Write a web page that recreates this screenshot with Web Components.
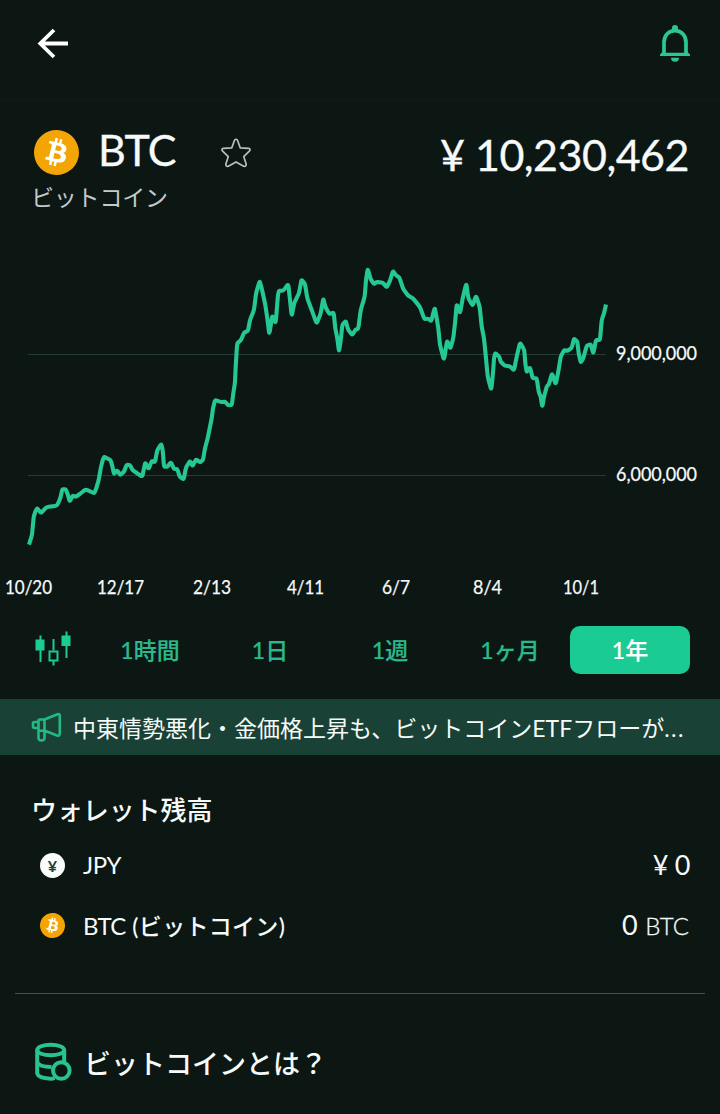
<!DOCTYPE html>
<html lang="ja">
<head>
<meta charset="utf-8">
<title>BTC</title>
<style>
body {
  margin: 0;
  background: #0c1714;
  color: #f6faf8;
  font-family: Lato, "Noto Sans CJK JP", sans-serif;
  --green: #1acb94;
  --green-text: #2bb98b;
}
</style>
</head>
<body>
<coin-page></coin-page>

<script>
class BaseElement extends HTMLElement {
  connectedCallback() {
    const root = this.attachShadow({ mode: "open" });
    const template = document.createElement("template");
    template.innerHTML = this.template();
    root.appendChild(template.content.cloneNode(true));
  }
}

class BtcCoin extends BaseElement {
  template() {
    return `
<style>
:host { display: block; width: 45px; height: 45px; }
svg { display: block; width: 100%; height: 100%; }
</style>
<svg viewBox="0 0 24 24">
  <circle cx="12" cy="12" r="10" fill="#fff"/>
  <path fill="#f2a505" d="M23.638 14.904c-1.602 6.43-8.113 10.34-14.542 8.736C2.67 22.05-1.244 15.525.362 9.105 1.962 2.67 8.475-1.243 14.9.358c6.43 1.605 10.342 8.115 8.738 14.548v-.002zm-6.35-4.613c.24-1.59-.974-2.45-2.64-3.03l.54-2.153-1.315-.33-.525 2.107c-.345-.087-.705-.167-1.064-.25l.526-2.127-1.32-.33-.54 2.165c-.285-.067-.565-.132-.84-.2l-1.815-.45-.35 1.407s.975.225.955.236c.535.136.63.486.615.766l-1.477 5.92c-.075.166-.24.406-.614.314.015.02-.96-.24-.96-.24l-.66 1.51 1.71.426.93.242-.54 2.19 1.32.327.54-2.17c.36.1.705.19 1.05.273l-.51 2.154 1.32.33.545-2.19c2.24.427 3.93.257 4.64-1.774.57-1.637-.03-2.58-1.217-3.196.854-.193 1.5-.76 1.68-1.93h.01zm-3.01 4.22c-.404 1.64-3.157.75-4.05.53l.72-2.9c.896.23 3.757.67 3.33 2.37zm.41-4.24c-.37 1.49-2.662.735-3.405.55l.654-2.64c.744.18 3.137.524 2.75 2.084v.006z"/>
</svg>`;
  }
}
customElements.define("btc-coin", BtcCoin);

class JpyCoin extends BaseElement {
  template() {
    return `
<style>
:host {
  display: flex;
  align-items: center;
  justify-content: center;
  box-sizing: border-box;
  width: 25px;
  height: 25px;
  border-radius: 50%;
  background: #fafcfb;
  color: #1b4036;
  font: 700 16px/25px Lato, sans-serif;
}
</style>
<span>¥</span>`;
  }
}
customElements.define("jpy-coin", JpyCoin);

class TopBar extends BaseElement {
  template() {
    return `
<style>
:host {
  display: flex;
  justify-content: space-between;
  align-items: flex-start;
  box-sizing: border-box;
  height: 100px;
  padding: 24px 28px 0 36px;
  border-bottom: 1px solid #0f1b18;
}
svg { display: block; }
</style>
<svg width="34" height="40" viewBox="0 0 34 40" fill="none" stroke="#fff" stroke-width="3.8">
  <path d="M32 19.5H4M18 6L4.3 19.5L18 33"/>
</svg>
<svg width="34" height="40" viewBox="0 0 34 40">
  <path d="M6 30V18.500C6 11.500 10.500 6.700 17 6.700S28 11.500 28 18.500V30" fill="none" stroke="#2bc694" stroke-width="3.700"/>
  <path fill="#2bc694" d="M14 6.500V4a3 3 0 0 1 6 0v2.500zM2 32v-1.500l4-4.300V28.800h22v-2.600l4 4.300V32zM13 33.800h8a4 4 0 0 1-8 0z"/>
</svg>`;
  }
}
customElements.define("top-bar", TopBar);

class AssetSummary extends BaseElement {
  template() {
    return `
<style>
:host {
  display: flex;
  justify-content: space-between;
  box-sizing: border-box;
  height: 140px;
  padding: 26px 31px 0 31px;
}
.title { display: flex; height: 54px; }
btc-coin { margin: 4px 0 0 3px; }
.symbol {
  width: 122px;
  margin-left: 19px;
  font-size: 43px;
  line-height: 48px;
  letter-spacing: -0.7px;
  -webkit-text-stroke: 0.3px;
}
.star { margin-top: 11px; }
.name {
  font-size: 23px;
  line-height: 34px;
  letter-spacing: -0.2px;
  color: #c3cac7;
}
.price {
  font-size: 43px;
  line-height: 57px;
  letter-spacing: -0.5px;
  white-space: pre;
  -webkit-text-stroke: 0.3px;
}
</style>
<div>
  <div class="title">
    <btc-coin></btc-coin>
    <span class="symbol"><slot name="symbol"></slot></span>
    <svg class="star" width="32" height="32" viewBox="0 0 32 32" fill="none" stroke="#b6bfbb" stroke-width="1.700" stroke-linejoin="round">
      <path d="M14.500 3.200Q16 1.300 17.500 3.200L20.200 10.800L28.600 11.300Q31 11.900 29.600 13.800L23.700 19.600L26.200 27.300Q26.200 30 23.700 29.200L16 24.900L8.300 29.200Q5.800 30 5.800 27.300L8.300 19.600L2.400 13.800Q1 11.900 3.400 11.300L11.800 10.800Z"/>
    </svg>
  </div>
  <div class="name"><slot name="name"></slot></div>
</div>
<div class="price"><slot name="price"></slot></div>`;
  }
}
customElements.define("asset-summary", AssetSummary);

// one year of prices, x/y in chart units
const YEAR_POINTS = `29,544.7 32,535 33.7,516.7 35.7,510.7 37.3,508.3 41,513 46.7,507 57,505.7 60.3,498.3
62.3,489.3 65.7,489.3 67.7,494.3 69.7,501.3 72.7,495.7 76,496.7 80.7,493.3 85.7,489.3 94.3,493.3
96.3,488.3 98.7,480 100.7,468.3 102.7,460 104.3,456.7 110.7,460.3 112.3,466 114,474 117,470.3
120.3,475 124,471.7 126.7,464.7 130,465 132.7,470.3 142.3,476.7 144,468.3 145.3,462.7 148.7,469
151.7,461 155,462 157.3,450 161.3,444 162.7,450 164,466.7 167.3,466.7 171,462.3 174,469 177.3,469
179.7,476.7 183.7,479.3 186,467.3 190,461 192.7,466 196,459.3 200,462.3 203,460 205,448.3
207.7,438.3 209,431.7 211.7,418.3 213,408.3 215,400 221,402 225,401.7 228.3,405.3 231.8,405
233.5,392 234.9,383.3 235.7,366.7 236.7,350 237.3,343.3 241,340 244,332.7 248,330.7 250,320
254,310 256,293.3 259.7,281 261.7,288.3 265,303.3 267.3,318.3 269.3,334.5 272.3,315.5 275.7,323.3
278.3,290.7 283.3,290.7 288.3,284 290,300 291.7,316 294.3,302.7 299,293.3 301.5,279.5 305,284
307.3,298.3 312.3,311.7 316.7,323.7 320.7,313.3 323.3,298.5 325.3,306.7 329.3,314 333.7,312.7
335.3,328.3 337.3,338.3 339,351.7 341,338.3 342.3,325 345.7,321 348.3,330 352.3,335 355.3,330
358.3,328.7 360.7,310 364.7,296.7 366,280 367.7,268.7 370.7,279.3 374,284 376.7,282 382.7,282.7
386.7,287.3 390,280.7 393,271 396,275.3 399.3,277.3 403.3,289.3 408.3,295.7 413.3,298.7 420,307
424.3,319 428,318.7 431.3,321 434.7,307.5 436.7,318.3 438.3,328.3 440,345 444,360.3 447,340.5
450.3,348.7 453.3,338.3 455,323.3 456.7,304 460,313.3 462.7,298.3 466.3,283.2 468.3,298.3
472.7,305.7 476,295.7 479.7,306.7 481.7,326.7 484,338.3 486,358.3 487.7,376.7 491.3,390
493,373.3 494,358.3 495.3,353 499.3,356.7 500.7,361.7 504.7,365.7 510,366.3 514,370.3
516.7,356.7 520,342.7 524.3,350 525.3,363.3 526.7,372 530,367.3 532.7,378.3 536.7,378.3
538.7,391.7 540.7,396.7 542.3,407 544,396.7 546.7,386.7 549,384 552,373.3 555.7,384.5
558.3,371.7 560.7,356.7 564,350.3 567.7,350.7 571.7,347.7 574,338.6 577.3,341.7 578.7,353.3
580.7,362.5 583.3,358.3 586.7,345.7 590.7,344.3 593.3,353.5 596,340 600,340 601.7,320 604,313.3 606,304.5`;

class PriceChart extends BaseElement {
  // round the corners: curve through the midpoints of the segments
  linePath() {
    const pts = YEAR_POINTS.split(/\s+/).map(p => p.split(",").map(Number));
    let d = `M${pts[0]}`;
    for (let i = 1; i < pts.length - 1; i++) {
      const [x0, y0] = pts[i - 1];
      const [x, y] = pts[i];
      const [x1, y1] = pts[i + 1];
      d += `L${x + (x0 - x) * 0.2} ${y + (y0 - y) * 0.2}Q${x} ${y} ${x + (x1 - x) * 0.2} ${y + (y1 - y) * 0.2}`;
    }
    return d + `L${pts[pts.length - 1]}`;
  }
  template() {
    const ylabels = [["9,000,000", 354, 360], ["6,000,000", 475, 481]];
    // label, x, width
    const xlabels = [
      ["10/20", 5, 47], ["12/17", 97, 47], ["2/13", 193, 38], ["4/11", 287, 37],
      ["6/7", 382, 28], ["8/4", 473, 29], ["10/1", 563, 36],
    ];
    return `
<style>
:host { display: block; height: 370px; }
svg { display: block; }
text { font: 20px Lato, sans-serif; fill: #f6faf8; stroke: #f6faf8; stroke-width: 0.25; }
.grid { stroke: #263a38; stroke-width: 1; }
.line {
  fill: none;
  stroke: #25c894;
  stroke-width: 4.1;
  stroke-linejoin: round;
}
</style>
<svg width="720" height="370" viewBox="0 240 720 370">
  ${ylabels.map(([t, y, ty]) => `<path class="grid" d="M28 ${y + 0.5}H606"/>
  <text x="616" y="${ty}" textLength="81" lengthAdjust="spacingAndGlyphs">${t}</text>`).join("")}
  <path class="line" d="${this.linePath()}"/>
  ${xlabels.map(([t, x, w]) => `<text x="${x}" y="594" textLength="${w}" lengthAdjust="spacingAndGlyphs">${t}</text>`).join("")}
</svg>`;
  }
}
customElements.define("price-chart", PriceChart);

class RangeTab extends BaseElement {
  template() {
    return `
<style>
:host {
  display: block;
  width: 120px;
  height: 48px;
  border-radius: 10px;
  color: var(--green-text);
  font-size: 23px;
  font-weight: 500;
  line-height: 49px;
  text-align: center;
  -webkit-text-stroke: 0.2px;
}
:host([active]) { background: var(--green); color: #fff; }
</style>
<slot></slot>`;
  }
}
customElements.define("range-tab", RangeTab);

class RangeTabs extends BaseElement {
  template() {
    return `
<style>
:host {
  display: flex;
  box-sizing: border-box;
  height: 89px;
  padding: 16px 30px 0 34px;
}
svg { flex: none; margin: 4px 16px 0 0; }
</style>
<svg width="40" height="38" viewBox="0 0 40 38" fill="none" stroke="#1acb94" stroke-width="2">
  <path d="M6.500 5.500V32M19.500 9V20.500M19.500 30.500V35.500M32.500 1.500V28"/>
  <path d="M2.500 10.500h7v9h-7zM28.500 6.500h7v8.500h-7z" fill="#1acb94"/>
  <path d="M15.500 21.500h8v9h-8z"/>
</svg>
<slot></slot>`;
  }
}
customElements.define("range-tabs", RangeTabs);

class NewsBanner extends BaseElement {
  template() {
    return `
<style>
:host {
  display: flex;
  align-items: center;
  box-sizing: border-box;
  height: 56px;
  padding: 0 20px 0 31px;
  background: #1a4135;
  font-size: 23px;
  line-height: 56px;
}
svg { flex: none; margin-right: 11px; }
p { margin: 0; white-space: nowrap; padding-top: 2px; }
.more { letter-spacing: 1.5px; }
</style>
<svg width="31" height="32" viewBox="0 0 31 32" fill="none" stroke="#22b985" stroke-width="2.600" stroke-linejoin="round">
  <path d="M8.500 8.500L14 8.200L26.500 3.200Q28.800 2.500 28.800 5V22.500Q28.800 25.500 26 24.500L14 19.800H8.500Q7.500 19.800 7.500 18.500V9.800Q7.500 8.500 8.500 8.500ZM13.500 8.500V19.500M7.500 11H3.500Q2 11 2 12.500V15.500Q2 17 3.500 17H7.500M7.500 19.500V27Q7.500 29.500 10.500 29.500T13.500 27V19.500"/>
</svg>
<p><slot></slot><span class="more">...</span></p>`;
  }
}
customElements.define("news-banner", NewsBanner);

class WalletRow extends BaseElement {
  template() {
    return `
<style>
:host {
  display: flex;
  align-items: center;
  height: 60px;
  padding: 0 30px 0 40px;
  font-size: 24px;
}
.icon { width: 43px; }
.label { flex: 1; }
.label, .amount { margin-top: -2px; }
.icon ::slotted(btc-coin) { width: 25px; height: 25px; }
</style>
<span class="icon"><slot name="icon"></slot></span>
<span class="label"><slot></slot></span>
<span class="amount"><slot name="amount"></slot></span>`;
  }
}
customElements.define("wallet-row", WalletRow);

class WalletBalance extends BaseElement {
  template() {
    return `
<style>
:host {
  display: block;
  box-sizing: border-box;
  height: 239px;
  margin: 0 15px;
  padding-top: 35px;
  border-bottom: 1px solid #46504c;
}
h2 {
  margin: 0 0 4px 16px;
  font-size: 26px;
  line-height: 41px;
  font-weight: 500;
  letter-spacing: -0.1px;
}
wallet-row { margin: 0 -15px; }
.jpy { letter-spacing: -0.4px; }
.btc { letter-spacing: -0.6px; position: relative; top: 1px; }
.kana { font-size: 23px; font-weight: 500; letter-spacing: 0.3px; margin-left: 1px; }
.num { font-size: 27px; letter-spacing: -0.3px; }
.unit { font-size: 24px; font-weight: 300; margin: 0 1px 0 8px; letter-spacing: 0; -webkit-text-stroke: 0.3px; }
</style>
<h2>ウォレット残高</h2>
<wallet-row>
  <jpy-coin slot="icon"></jpy-coin>
  <span class="jpy">JPY</span>
  <span slot="amount" class="num">¥ 0</span>
</wallet-row>
<wallet-row>
  <btc-coin slot="icon"></btc-coin>
  <span class="btc">BTC <span class="kana">(ビットコイン)</span></span>
  <span slot="amount"><span class="num">0</span><span class="unit">BTC</span></span>
</wallet-row>`;
  }
}
customElements.define("wallet-balance", WalletBalance);

class AboutLink extends BaseElement {
  template() {
    return `
<style>
:host {
  display: flex;
  align-items: center;
  box-sizing: border-box;
  height: 120px;
  padding: 16px 30px 0 34px;
  font-size: 27px;
  font-weight: 500;
}
svg { margin-right: 12px; }
</style>
<svg width="38" height="40" viewBox="0 0 38 40" fill="none" stroke="#28c391" stroke-width="4">
  <ellipse cx="16.700" cy="8" rx="13.500" ry="5.300"/>
  <path d="M3.200 8V31.500Q4.500 36.200 16.700 36.700Q19 36.700 20.500 36M30.200 8V20M3.200 20Q5.500 25 17.500 25"/>
  <circle cx="27.300" cy="28.500" r="8.300"/>
</svg>
<slot></slot>`;
  }
}
customElements.define("about-link", AboutLink);

class CoinPage extends BaseElement {
  template() {
    return `
<style>
:host { display: block; width: 720px; height: 1114px; overflow: hidden; }
</style>
<top-bar></top-bar>
<asset-summary>
  <span slot="symbol">BTC</span>
  <span slot="name">ビットコイン</span>
  <span slot="price">¥ 10,230,462</span>
</asset-summary>
<price-chart></price-chart>
<range-tabs>
  <range-tab>1時間</range-tab>
  <range-tab>1日</range-tab>
  <range-tab>1週</range-tab>
  <range-tab>1ヶ月</range-tab>
  <range-tab active>1年</range-tab>
</range-tabs>
<news-banner>中東情勢悪化・金価格上昇も、ビットコインETFフローが</news-banner>
<wallet-balance></wallet-balance>
<about-link>ビットコインとは？</about-link>`;
  }
}
customElements.define("coin-page", CoinPage);
</script>
</body>
</html>
